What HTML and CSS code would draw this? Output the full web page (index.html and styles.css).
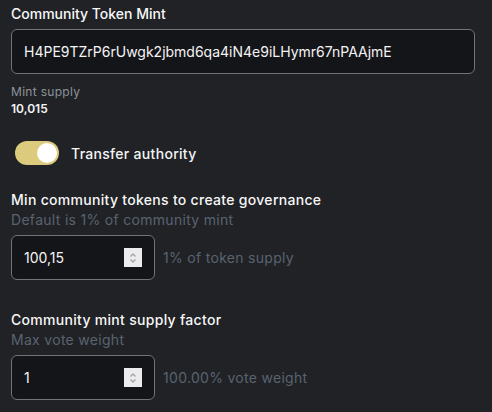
FILE: index.html
```html
<!DOCTYPE html>
<html>
<head>
<meta charset="utf-8">
<link rel="stylesheet" href="styles.css">
</head>
<body>
<div class="form">
  <div class="label">Community Token Mint</div>
  <div class="field wide"><span class="value">H4PE9TZrP6rUwgk2jbmd6qa4iN4e9iLHymr67nPAAjmE</span></div>
  <div class="supply-label">Mint supply</div>
  <div class="supply-value">10,015</div>

  <div class="toggle-row">
    <span class="toggle"><span class="knob"></span></span>
    <span class="toggle-text">Transfer authority</span>
  </div>

  <div class="label spaced gov">Min community tokens to create governance</div>
  <div class="hint">Default is 1% of community mint</div>
  <div class="num-row">
    <div class="field num">
      <span class="value">100,15</span>
      <span class="spinner"><svg width="18" height="18" viewBox="0 0 18 18"><path d="M6.5 7.5 L9 5 L11.5 7.5 M6.5 10.5 L9 13 L11.5 10.5" fill="none" stroke="#a3a4ab" stroke-width="1.3"/></svg></span>
    </div>
    <span class="aside">1% of token supply</span>
  </div>

  <div class="label spaced factor">Community mint supply factor</div>
  <div class="hint">Max vote weight</div>
  <div class="num-row">
    <div class="field num">
      <span class="value">1</span>
      <span class="spinner"><svg width="18" height="18" viewBox="0 0 18 18"><path d="M6.5 7.5 L9 5 L11.5 7.5 M6.5 10.5 L9 13 L11.5 10.5" fill="none" stroke="#a3a4ab" stroke-width="1.3"/></svg></span>
    </div>
    <span class="aside">100.00% vote weight</span>
  </div>
</div>
</body>
</html>
```
FILE: styles.css
```css
html, body {
  margin: 0;
  padding: 0;
  background: #202226;
}
body {
  font-family: Inter, "Noto Sans", sans-serif;
  color: #f4f4f5;
  overflow: hidden;
}
.form {
  display: flex;
  flex-direction: column;
  padding: 4px 17px 0 11px;
}
.label {
  font-size: 14px;
  line-height: 20px;
  font-weight: 500;
  color: #f7f7f8;
}
.spaced {
  letter-spacing: 0.3px;
}
.field {
  box-sizing: border-box;
  height: 45px;
  margin-top: 5px;
  border: 1px solid #6f737b;
  border-radius: 6px;
  background: #141518;
  display: flex;
  align-items: center;
  padding: 0 12px;
  font-size: 14px;
  color: #f4f4f5;
}
.supply-label {
  margin-top: 10px;
  font-size: 12px;
  line-height: 16px;
  letter-spacing: 0.3px;
  color: #8e929a;
}
.supply-value {
  margin-top: 1px;
  font-size: 12px;
  line-height: 16px;
  font-weight: 600;
  color: #f4f4f5;
}
.toggle-row {
  margin-top: 24px;
  display: flex;
  align-items: center;
  padding-left: 4px;
}
.toggle {
  box-sizing: border-box;
  width: 44px;
  height: 24px;
  border-radius: 12px;
  background: #dccb7c;
  display: flex;
  align-items: center;
  justify-content: flex-end;
  padding-right: 2px;
}
.knob {
  width: 20px;
  height: 20px;
  border-radius: 50%;
  background: #ffffff;
}
.toggle-text {
  margin-left: 12px;
  font-size: 14px;
  font-weight: 500;
  letter-spacing: 0.3px;
  color: #f4f4f5;
}
.gov {
  margin-top: 25px;
}
.factor {
  margin-top: 30px;
}
.hint {
  font-size: 14px;
  line-height: 20px;
  letter-spacing: 0.3px;
  color: #5a6270;
}
.num-row {
  display: flex;
  align-items: flex-end;
}
.num {
  width: 144px;
  justify-content: space-between;
  padding-right: 12px;
}
.spinner {
  width: 18px;
  height: 19px;
  background: #ececef;
  display: flex;
  align-items: center;
  justify-content: center;
}
.aside {
  margin-left: 8px;
  height: 45px;
  display: flex;
  align-items: center;
  font-size: 14px;
  letter-spacing: 0.3px;
  color: #5a6270;
}
```
